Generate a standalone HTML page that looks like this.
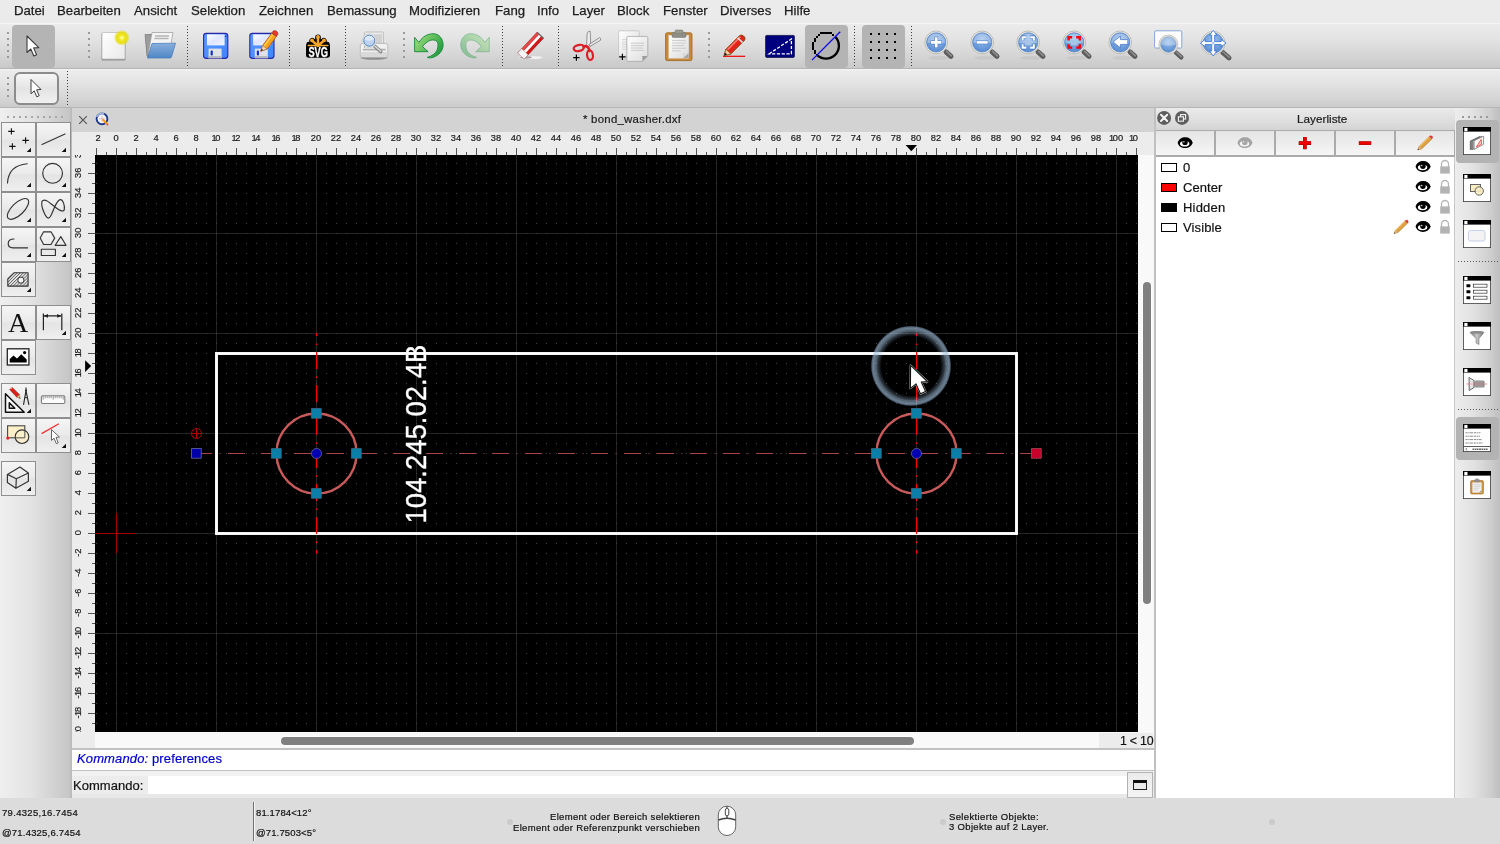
<!DOCTYPE html>
<html><head><meta charset="utf-8"><title>QCAD</title>
<style>
html,body{margin:0;padding:0;}
body{width:1500px;height:844px;overflow:hidden;position:relative;background:#ececec;font-family:"Liberation Sans",sans-serif;color:#1e1e1e;}
.abs{position:absolute;}
svg{position:absolute;overflow:visible;}
#menubar{left:0;top:0;width:1500px;height:23px;background:#ebebeb;}
#menubar span{position:absolute;top:2px;font-size:13.2px;line-height:18px;color:#1c1c1c;white-space:nowrap;}
#tb1{left:0;top:23px;width:1500px;height:45px;background:linear-gradient(#f5f5f5 0,#f5f5f5 1px,#ebebeb 1.5px,#e3e3e3 35%,#d6d6d6 70%,#c9c9c9);border-bottom:1px solid #b4b4b4;box-sizing:content-box;}
#tb2{left:0;top:69px;width:1500px;height:38px;background:linear-gradient(#f3f3f3 0,#f3f3f3 1px,#ececec 1.5px,#e2e2e2 40%,#d6d6d6 75%,#cbcbcb);border-bottom:1px solid #b6b6b6;}
.sel{background:#b4b4b4;border-radius:4px;}
.vsep{width:0;border-left:1px dotted #555;}
.grip{width:2px;}
#left{left:0;top:108px;width:72px;height:690px;background:linear-gradient(90deg,#efefef,#e2e2e2 45%,#c6c6c6 96%,#b8b8b8);}
.tbtn{position:absolute;width:33px;height:33px;border:1px solid #8f8f8f;background:linear-gradient(#f5f5f5,#eaeaea 48%,#e4e4e4 52%,#efefef);box-sizing:content-box;}
#status{left:0;top:798px;width:1500px;height:46px;background:#dcdcdc;}
#status div{position:absolute;font-size:9.5px;line-height:12px;white-space:nowrap;color:#111;}

#root{position:absolute;left:0;top:0;width:1500px;height:844px;}
#menubar span,#status div,.t{will-change:transform;}
svg.t{will-change:transform;}
#menubar span{-webkit-text-stroke:0.25px #1c1c1c;}
#status div{-webkit-text-stroke:0.2px #111;}
.t{-webkit-text-stroke:0.2px currentColor;}

</style></head>
<body>
<!-- menubar.html -->
<div id="menubar" class="abs">
<span style="left:14px">Datei</span>
<span style="left:57px">Bearbeiten</span>
<span style="left:134px">Ansicht</span>
<span style="left:191px">Selektion</span>
<span style="left:259px">Zeichnen</span>
<span style="left:327px">Bemassung</span>
<span style="left:409px">Modifizieren</span>
<span style="left:495px">Fang</span>
<span style="left:537px">Info</span>
<span style="left:572px">Layer</span>
<span style="left:617px">Block</span>
<span style="left:663px">Fenster</span>
<span style="left:720px">Diverses</span>
<span style="left:784px">Hilfe</span>
</div>

<!-- toolbar.html -->
<div id="tb1" class="abs"></div>
<div id="tb2" class="abs"></div>
<div class="abs sel" style="left:12px;top:24.8px;width:43px;height:43.2px;"></div>
<div class="abs sel" style="left:805px;top:24.8px;width:43px;height:43.2px;"></div>
<div class="abs sel" style="left:862px;top:24.8px;width:43px;height:43.2px;"></div>
<div class="abs" style="left:14px;top:72px;width:41px;height:29px;border:2px solid #8c8c8c;border-radius:6px;background:linear-gradient(#f6f6f6,#e4e4e4 50%,#f0f0f0);"></div>
<svg width="1500" height="844" viewBox="0 0 1500 844" style="left:0;top:0">
<defs>
<linearGradient id="gpaper" x1="0" y1="0" x2="1" y2="1"><stop offset="0" stop-color="#ffffff"/><stop offset="1" stop-color="#e9e9e9"/></linearGradient>
<radialGradient id="gglow"><stop offset="0" stop-color="#ffffd0"/><stop offset="0.18" stop-color="#fbf45a"/><stop offset="0.45" stop-color="#ece314"/><stop offset="0.72" stop-color="#e6dc00" stop-opacity="0.8"/><stop offset="1" stop-color="#e6dc00" stop-opacity="0"/></radialGradient>
<linearGradient id="gfold" x1="0" y1="0" x2="0" y2="1"><stop offset="0" stop-color="#8ab0dc"/><stop offset="1" stop-color="#4f86c6"/></linearGradient>
<linearGradient id="gfloppy" x1="0" y1="0" x2="1" y2="1"><stop offset="0" stop-color="#5a9cff"/><stop offset="1" stop-color="#3f84ff"/></linearGradient>
<linearGradient id="glabel" x1="0" y1="0" x2="1" y2="1"><stop offset="0" stop-color="#ffffff"/><stop offset="0.5" stop-color="#dfe6ff"/><stop offset="1" stop-color="#f4f6ff"/></linearGradient>
<radialGradient id="glens" cx="0.5" cy="0.35" r="0.7"><stop offset="0" stop-color="#9dc0ea"/><stop offset="1" stop-color="#4f86cf"/></radialGradient>
<linearGradient id="gundo" x1="0" y1="0" x2="0" y2="1"><stop offset="0" stop-color="#6fd06f"/><stop offset="1" stop-color="#168a3a"/></linearGradient>
<g id="mag">
 <ellipse cx="3" cy="15.4" rx="11" ry="2" fill="#000" opacity="0.05"/>
 <line x1="9.8" y1="9.4" x2="14.8" y2="14" stroke="#5c5c5c" stroke-width="5" stroke-linecap="round"/>
 <line x1="10.4" y1="9" x2="15.2" y2="13.4" stroke="#8e8e8e" stroke-width="1.6" stroke-linecap="round"/>
 <circle cx="0" cy="0" r="11.4" fill="#e6e6e0" stroke="#b4b4ac" stroke-width="0.8"/>
 <circle cx="0" cy="0" r="9.6" fill="url(#glens)" stroke="#5a86cc" stroke-width="0.8"/>
 <path d="M-9.2,0.4 A9.2,9.2 0 0 1 9.2,0.4 Q0,1.4 -9.2,0.4Z" fill="#fff" opacity="0.28"/>
</g>
</defs>
<!-- grips -->
<g fill="#9a9a9a">
<g id="grip1"><rect x="7" y="32" width="2" height="2"/><rect x="7" y="38" width="2" height="2"/><rect x="7" y="44" width="2" height="2"/><rect x="7" y="50" width="2" height="2"/><rect x="7" y="56" width="2" height="2"/></g>
<use href="#grip1" x="81"/><use href="#grip1" x="396"/><use href="#grip1" x="701"/>
<rect x="7" y="77" width="2" height="2"/><rect x="7" y="83" width="2" height="2"/><rect x="7" y="89" width="2" height="2"/><rect x="7" y="95" width="2" height="2"/>
</g>
<!-- dotted separators -->
<g stroke="#3c3c3c" stroke-width="1" stroke-dasharray="1 2">
<line x1="187.5" y1="26" x2="187.5" y2="66"/><line x1="289.5" y1="26" x2="289.5" y2="66"/><line x1="345.5" y1="26" x2="345.5" y2="66"/>
<line x1="502.5" y1="26" x2="502.5" y2="66"/><line x1="558.5" y1="26" x2="558.5" y2="66"/><line x1="854.5" y1="26" x2="854.5" y2="66"/><line x1="911.5" y1="26" x2="911.5" y2="66"/>
<line x1="67.5" y1="71" x2="67.5" y2="105"/>
</g>
<!-- arrow (selected) -->
<path d="M27,36 L27,52.5 L30.8,49 L33.8,56 L36.6,54.8 L33.6,47.9 L38.8,47.6 Z" fill="#fff" stroke="#3c3c3c" stroke-width="1.1" stroke-linejoin="round"/>
<!-- arrow (tb2) -->
<path d="M31,79.5 L31,93.8 L34.2,90.8 L36.8,96.8 L39.2,95.7 L36.6,89.8 L41,89.5 Z" fill="#fff" stroke="#3c3c3c" stroke-width="1" stroke-linejoin="round"/>
<!-- new -->
<g>
<rect x="101.5" y="33" width="24" height="27.6" rx="1.5" fill="#8e8e8e"/>
<rect x="102" y="32.5" width="23" height="26.5" rx="1" fill="url(#gpaper)" stroke="#bdbdbd" stroke-width="0.8"/>
<circle cx="121.8" cy="37.8" r="8" fill="url(#gglow)"/>
</g>
<!-- open -->
<g>
<path d="M145,35 L151,34 L151,56 L147,57 Z" fill="#8a8a8a"/>
<path d="M145,34.5 L160,34.5 L158,56 L147,56 Z" fill="#9c9c9c" stroke="#7a7a7a" stroke-width="0.6"/>
<path d="M152,32.5 L173,32.5 L170,50 L148,55 Z" fill="#f4f4f4" stroke="#9a9a9a" stroke-width="0.7"/>
<path d="M155,36 L169,36 M154.5,38.5 L168.5,38.5" stroke="#b4b4b4" stroke-width="1.4"/>
<path d="M152,43.5 L175.5,43.2 L171.5,57 Q171,58 170,58 L147.5,58 Z" fill="url(#gfold)" stroke="#4a7fbd" stroke-width="0.8" stroke-linejoin="round"/>
</g>
<!-- save -->
<g id="floppy">
<rect x="203.6" y="33.4" width="24.2" height="25" rx="2.6" fill="url(#gfloppy)" stroke="#2727a8" stroke-width="1.1"/>
<rect x="207" y="34.4" width="17.6" height="11" fill="url(#glabel)"/>
<rect x="208.6" y="48.6" width="13" height="9.6" fill="#e2e2e6"/>
<rect x="208.6" y="56" width="13" height="2.2" fill="#b8b8c0"/>
<rect x="210.6" y="50.6" width="2.2" height="5" rx="0.8" fill="#1030c8"/>
<rect x="225" y="35.6" width="1.4" height="1.4" fill="#1c3cc8"/>
</g>
<!-- save as -->
<use href="#floppy" x="46.2"/>
<g>
<path d="M260.8,51.2 L262.6,45.6 L271.8,33 L276.4,36.4 L267.2,49 Z" fill="#f7a21e" stroke="#b5501a" stroke-width="0.8" stroke-linejoin="round"/>
<path d="M264,46.4 L272.6,34.6" stroke="#ffd24a" stroke-width="1.6"/>
<path d="M271.8,33 L273.2,31 Q275,30 277,31.6 Q278.4,33.4 277.8,34.4 L276.4,36.4Z" fill="#e63a2c" stroke="#a0281e" stroke-width="0.6"/>
<path d="M260.8,51.2 L262.6,45.6 L267.2,49 Z" fill="#f3d9b0" stroke="#8a5a2a" stroke-width="0.5"/>
<path d="M260.8,51.2 L261.6,48.8 L263,49.9Z" fill="#222"/>
</g>
<!-- SVG logo -->
<g>
<path d="M318,46 L318,37.2 M318,46 L312.2,40.6 M318,46 L323.8,40.6 M318,46 L309,44.6 M318,46 L327,44.6" stroke="#000" stroke-width="5.6" stroke-linecap="round" fill="none"/>
<rect x="306" y="44" width="24" height="13.8" rx="2.8" fill="#000"/>
<path d="M318,46 L318,37.2 M318,46 L312.2,40.6 M318,46 L323.8,40.6" stroke="#f8a626" stroke-width="2.5" stroke-linecap="round" fill="none"/>
<path d="M308.2,45.4 L327.8,45.4" stroke="#f8a626" stroke-width="1.5" stroke-linecap="round"/>
<g fill="#f8a626"><circle cx="318" cy="37" r="1.9"/><circle cx="312" cy="40.4" r="1.9"/><circle cx="324" cy="40.4" r="1.9"/></g>
</g>
<!-- print preview -->
<g>
<ellipse cx="374" cy="57.8" rx="13.4" ry="2" fill="#000" opacity="0.32"/>
<rect x="364.4" y="32" width="19" height="14" rx="0.8" fill="#ececec" stroke="#b4b4b4" stroke-width="0.8"/>
<rect x="373.6" y="34.2" width="8.4" height="9.6" fill="#d2d2d2"/>
<path d="M362.4,43.4 L385.6,43.4 Q387.8,43.6 387.8,45.8 L387.8,55 Q387.8,57.2 385.6,57.2 L362.4,57.2 Q360.3,57.2 360.3,55 L360.3,45.8 Q360.3,43.4 362.4,43.4Z" fill="#f0f0f0" stroke="#b0b0b0" stroke-width="0.8"/>
<path d="M360.7,52 L387.4,52 L387.4,55 Q387.4,56.8 385.6,56.8 L362.4,56.8 Q360.7,56.8 360.7,55Z" fill="#d9d9d9"/>
<rect x="362.8" y="48.8" width="23" height="1.8" rx="0.9" fill="#b2b2b2"/>
<circle cx="364.6" cy="47" r="0.6" fill="#666"/>
<line x1="374.6" y1="46.2" x2="380.8" y2="51.6" stroke="#8a8a8a" stroke-width="3.6" stroke-linecap="round"/>
<line x1="375" y1="46.2" x2="380.8" y2="51.2" stroke="#dcdcdc" stroke-width="1.4" stroke-linecap="round"/>
<circle cx="369.3" cy="40.7" r="7" fill="#ebebe7" stroke="#c2c2bc" stroke-width="0.6"/>
<circle cx="369.3" cy="40.7" r="5.5" fill="#bcd2ee" stroke="#4f82cc" stroke-width="1"/>
<path d="M364.4,39.8 A5,5 0 0 1 374.2,39.6 Q369.4,42 364.4,39.8Z" fill="#fff" opacity="0.5"/>
</g>
<!-- undo -->
<defs>
<linearGradient id="gundo2" x1="0" y1="0.2" x2="1" y2="0.8"><stop offset="0" stop-color="#9cdc7c"/><stop offset="0.45" stop-color="#62c05c"/><stop offset="0.8" stop-color="#34a648"/><stop offset="1" stop-color="#1c9440"/></linearGradient>
<path id="undoP" d="M414.6,37.3 L414.6,51.7 L428.1,51.7 L422.4,46.5 C425,43.6 427.4,41.6 429.6,40.6 C431,40 432.6,39.8 433.8,40 C436.4,40.4 438,42 438,44.4 C438,46.4 437.8,48.2 437.2,49.8 C435.6,53.6 431.6,56.4 427.2,57.4 C428.6,58 430.4,58 432,57.6 C438.6,56 443.1,50.8 443.1,44.8 C443.1,38.4 438.8,33.7 433.2,33.7 C429.6,33.7 426.4,35 423.6,37 C421.8,38.4 420.2,40.4 418.8,42.4 Z"/>
</defs>
<use href="#undoP" fill="url(#gundo2)" stroke="#14883a" stroke-width="0.9" stroke-linejoin="round"/>
<!-- redo (disabled) -->
<g transform="translate(903.8,0) scale(-1,1)" opacity="0.42"><use href="#undoP" fill="url(#gundo2)" stroke="#14883a" stroke-width="0.9" stroke-linejoin="round"/></g>
<!-- eraser -->
<g>
<ellipse cx="531" cy="57.6" rx="12" ry="1.5" fill="#fff" opacity="0.7"/>
<ellipse cx="526" cy="57.4" rx="6" ry="1.3" fill="#6a5a5a" opacity="0.55"/>
<g transform="translate(530.8,45.4) rotate(-47)">
<rect x="-14.4" y="-4.4" width="28.4" height="8.8" fill="#d01818" stroke="#8a1a1a" stroke-width="0.5"/>
<rect x="-14.4" y="-4.4" width="28.4" height="2.6" fill="#e24a4a"/>
<rect x="-14.4" y="-1.4" width="28.4" height="2.8" fill="#fff"/>
<rect x="-14.4" y="-4.4" width="5.6" height="8.8" fill="#f6f6f6" stroke="#b8a0a0" stroke-width="0.5"/>
<rect x="13.2" y="-4.4" width="1.2" height="8.8" fill="#6a6a6a"/>
</g>
</g>
<!-- scissors (cut) -->
<g>
<path d="M586.6,46.6 L587.2,33 Q588.4,30.6 590.2,31.4 L590.6,43 L588.6,47 Z" fill="#efefef" stroke="#6a6a6a" stroke-width="0.7" stroke-linejoin="round"/>
<path d="M588.8,44.6 L599.6,37.6 Q601,38 600.6,40.2 L590,46.4 Z" fill="#e8e8e8" stroke="#6a6a6a" stroke-width="0.7" stroke-linejoin="round"/>
<ellipse cx="578.8" cy="48" rx="5.2" ry="3" transform="rotate(-12 578.8 48)" fill="none" stroke="#e01c24" stroke-width="2.2"/>
<ellipse cx="590" cy="55.2" rx="2.9" ry="4.8" transform="rotate(-8 590 55.2)" fill="none" stroke="#e01c24" stroke-width="2.2"/>
<path d="M583.4,46.6 Q586.4,45.4 588,47.4 Q589.4,49 589.2,51" fill="none" stroke="#e01c24" stroke-width="2.6" stroke-linecap="round"/>
<path d="M573.2,57.6 L579.6,57.6 M576.4,54.4 L576.4,60.8" stroke="#000" stroke-width="1.2"/>
</g>
<!-- copy -->
<g>
<defs><linearGradient id="gpg" x1="0" y1="0" x2="1" y2="1"><stop offset="0" stop-color="#ffffff"/><stop offset="1" stop-color="#dcdcdc"/></linearGradient></defs>
<rect x="618.6" y="30.8" width="20.6" height="25.4" rx="1.2" fill="url(#gpg)" stroke="#c2c2c2" stroke-width="0.8"/>
<path d="M622,39.6 L628,39.6 M622,42 L628,42 M622,44.4 L628,44.4 M622,46.8 L628,46.8 M622,49.2 L628,49.2" stroke="#d4d4d4" stroke-width="0.9"/>
<path d="M628,36.4 L646.6,36.4 Q647.8,36.4 647.8,37.6 L647.8,56 L642.4,61.4 L628,61.4 Q626.8,61.4 626.8,60.2 L626.8,37.6 Q626.8,36.4 628,36.4 Z" fill="url(#gpg)" stroke="#a6a6a6" stroke-width="0.8"/>
<path d="M647.6,56 L642.4,56 L642.4,61.2 Z" fill="#9c9c9c"/>
<path d="M631,43.2 L644,43.2 M631,45.6 L644,45.6 M631,48 L643,48 M631,50.4 L644,50.4" stroke="#c6c6c6" stroke-width="0.9"/>
<path d="M619.2,56.9 L625.6,56.9 M622.4,53.7 L622.4,60.1" stroke="#000" stroke-width="1.2"/>
</g>
<!-- paste -->
<g>
<rect x="665.6" y="32.8" width="26.4" height="27.8" rx="1.6" fill="#c88a38" stroke="#9c6418" stroke-width="0.8"/>
<rect x="668.8" y="35.2" width="20" height="23" fill="url(#gpg)" stroke="#d8d8d8" stroke-width="0.4"/>
<path d="M672,40.4 L686,40.4 M672,43 L685.6,43 M672,45.6 L684,45.6 M672,48.2 L686,48.2 M672,50.8 L680.6,50.8" stroke="#c4c4c4" stroke-width="0.9"/>
<path d="M688.6,53 L683.4,53 L683.4,58 L688.6,58Z" fill="#a6a6a6"/><path d="M688.6,53 L683.4,58 L683.4,53Z" fill="#dedede"/>
<rect x="672" y="32.4" width="14" height="5" rx="1.2" fill="#8e8e86" stroke="#74746c" stroke-width="0.5"/>
<rect x="675" y="30" width="8" height="3.4" rx="1" fill="#9c9c94" stroke="#74746c" stroke-width="0.5"/>
</g>
<!-- pencil -->
<g>
<line x1="723" y1="56.3" x2="745.2" y2="56.3" stroke="#f00000" stroke-width="1.2"/>
<path d="M724.2,55.4 L726,49.2 L739.6,35.6 Q741.6,34.2 743.6,36 L744.4,36.8 Q745.8,38.8 744.4,40.4 L730.8,54 Z" fill="#e42418" stroke="#7a4a10" stroke-width="0.9" stroke-linejoin="round"/>
<path d="M727.6,49.6 L740.4,36.8" stroke="#ff7a6a" stroke-width="1.6"/>
<path d="M737.6,37.8 L742.6,42.6" stroke="#d8d8d8" stroke-width="1.8"/>
<path d="M724.2,55.4 L726,49.2 L730.8,54 Z" fill="#f0d2a4" stroke="#7a4a10" stroke-width="0.6" stroke-linejoin="round"/>
<path d="M724.2,55.4 L725,52.6 L727,54.6Z" fill="#111"/>
</g>
<!-- draft -->
<g>
<rect x="765.6" y="35.4" width="28.8" height="22" rx="1" fill="#00007e" stroke="#10104a" stroke-width="0.8"/>
<path d="M769.2,53.8 L791.4,39 L791.4,53.8 Z" fill="none" stroke="#fff" stroke-width="1.3" stroke-dasharray="3.2 1.6"/>
</g>
<!-- circle-slash -->
<g>
<clipPath id="cul"><path d="M800,72.1 L852,20 L800,20Z"/></clipPath>
<clipPath id="clr"><path d="M800,72.1 L852,20 L852,72.1Z"/></clipPath>
<g fill="#000" shape-rendering="crispEdges"><rect x="812" y="42" width="2" height="2"/><rect x="812" y="44" width="2" height="2"/><rect x="812" y="46" width="2" height="2"/><rect x="812" y="48" width="2" height="2"/><rect x="814" y="38" width="2" height="2"/><rect x="814" y="40" width="2" height="2"/><rect x="814" y="50" width="2" height="2"/><rect x="814" y="52" width="2" height="2"/><rect x="816" y="36" width="2" height="2"/><rect x="816" y="54" width="2" height="2"/><rect x="818" y="34" width="2" height="2"/><rect x="820" y="32" width="2" height="2"/><rect x="822" y="32" width="2" height="2"/><rect x="824" y="32" width="2" height="2"/><rect x="826" y="32" width="2" height="2"/><rect x="828" y="32" width="2" height="2"/><rect x="830" y="32" width="2" height="2"/><rect x="832" y="34" width="2" height="2"/></g>
<circle cx="826" cy="45.8" r="12.9" fill="none" stroke="#000" stroke-width="2.3" clip-path="url(#clr)"/>
<line x1="812" y1="60.1" x2="840.2" y2="31.8" stroke="#0a0af4" stroke-width="1.3"/>
</g>
<!-- grid -->
<g fill="#000">
<rect x="870" y="33" width="2" height="2"/><rect x="878" y="33" width="2" height="2"/><rect x="886" y="33" width="2" height="2"/><rect x="894" y="33" width="2" height="2"/><rect x="870" y="41" width="2" height="2"/><rect x="878" y="41" width="2" height="2"/><rect x="886" y="41" width="2" height="2"/><rect x="894" y="41" width="2" height="2"/><rect x="870" y="49" width="2" height="2"/><rect x="878" y="49" width="2" height="2"/><rect x="886" y="49" width="2" height="2"/><rect x="894" y="49" width="2" height="2"/><rect x="870" y="57" width="2" height="2"/><rect x="878" y="57" width="2" height="2"/><rect x="886" y="57" width="2" height="2"/><rect x="894" y="57" width="2" height="2"/>
</g>
<!-- zoom in -->
<use href="#mag" x="936.2" y="42.4"/>
<path d="M930.6,42.4 L941.8,42.4 M936.2,36.8 L936.2,48" stroke="#3a6cc0" stroke-width="3.8"/><path d="M931,42.4 L941.4,42.4 M936.2,37.2 L936.2,47.6" stroke="#fff" stroke-width="2.8"/>
<!-- zoom out -->
<use href="#mag" x="982.2" y="42.4"/>
<path d="M976.2,42.4 L988.2,42.4" stroke="#3a6cc0" stroke-width="3.6"/><path d="M976.6,42.4 L987.8,42.4" stroke="#fff" stroke-width="2.6"/>
<!-- zoom auto -->
<use href="#mag" x="1028.2" y="42.4"/>
<rect x="1025" y="39.6" width="6.4" height="5.6" fill="#a8c4e8"/>
<path d="M1022.6,40.6 L1022.6,37.2 L1026.2,37.2 M1030.2,37.2 L1033.8,37.2 L1033.8,40.6 M1033.8,44.2 L1033.8,47.6 L1030.2,47.6 M1026.2,47.6 L1022.6,47.6 L1022.6,44.2" fill="none" stroke="#3a6cc0" stroke-width="3.2"/>
<path d="M1022.6,40.6 L1022.6,37.2 L1026.2,37.2 M1030.2,37.2 L1033.8,37.2 L1033.8,40.6 M1033.8,44.2 L1033.8,47.6 L1030.2,47.6 M1026.2,47.6 L1022.6,47.6 L1022.6,44.2" fill="none" stroke="#fff" stroke-width="2.1"/>
<!-- zoom selection -->
<use href="#mag" x="1074.2" y="42.4"/>
<rect x="1071" y="39.6" width="6.4" height="5.6" fill="#a8c4e8"/>
<path d="M1068.6,40.6 L1068.6,37.2 L1072.2,37.2 M1076.2,37.2 L1079.8,37.2 L1079.8,40.6 M1079.8,44.2 L1079.8,47.6 L1076.2,47.6 M1072.2,47.6 L1068.6,47.6 L1068.6,44.2" fill="none" stroke="#f80010" stroke-width="2.4"/>
<!-- zoom previous -->
<use href="#mag" x="1120.2" y="42.4"/>
<path d="M1113,42 L1120.4,36.2 L1120.4,39.6 L1127.8,39.6 L1127.8,44.4 L1120.4,44.4 L1120.4,47.8 Z" fill="#fff" stroke="#3a6cc0" stroke-width="0.7" stroke-linejoin="round"/>
<!-- zoom window -->
<g>
<rect x="1154.6" y="30.8" width="27.2" height="17.2" rx="1.2" fill="#fdfdfd" stroke="#7a9cd4" stroke-width="0.9"/>
<line x1="1176" y1="52.6" x2="1181.2" y2="57.2" stroke="#5c5c5c" stroke-width="4.6" stroke-linecap="round"/>
<line x1="1176.4" y1="52.2" x2="1181.4" y2="56.6" stroke="#8e8e8e" stroke-width="1.5" stroke-linecap="round"/>
<circle cx="1168.4" cy="44.6" r="9.6" fill="#e2e2dc" stroke="#b8b8b0" stroke-width="0.7"/>
<circle cx="1168.4" cy="44.6" r="7.8" fill="url(#glens)" stroke="#8d9bb0" stroke-width="0.5"/>
<path d="M1160.8,44.6 A7.6,7.6 0 0 1 1176,44.6 Q1168.4,47 1160.8,44.6Z" fill="#fff" opacity="0.3"/>
</g>
<!-- pan -->
<g>
<line x1="1222.6" y1="52.4" x2="1229" y2="57.8" stroke="#5c5c5c" stroke-width="5" stroke-linecap="round"/>
<line x1="1223" y1="52" x2="1229.2" y2="57.2" stroke="#8e8e8e" stroke-width="1.6" stroke-linecap="round"/>
<circle cx="1213.2" cy="43.1" r="11.8" fill="#e6e6e0" stroke="#b4b4ac" stroke-width="0.8"/>
<circle cx="1213.2" cy="43.1" r="10.1" fill="url(#glens)" stroke="#5a86cc" stroke-width="0.8"/>
<path d="M1213.2,30.3 L1216.9,35.1 L1214.7,35.1 L1214.7,41.6 L1221.2,41.6 L1221.2,39.4 L1226.0,43.1 L1221.2,46.8 L1221.2,44.6 L1214.7,44.6 L1214.7,51.1 L1216.9,51.1 L1213.2,55.9 L1209.5,51.1 L1211.7,51.1 L1211.7,44.6 L1205.2,44.6 L1205.2,46.8 L1200.4,43.1 L1205.2,39.4 L1205.2,41.6 L1211.7,41.6 L1211.7,35.1 L1209.5,35.1Z" fill="#fff" stroke="#3f78d4" stroke-width="0.9" stroke-linejoin="round"/>
<rect x="1211.7" y="41.6" width="3" height="3" fill="#b4ccf0"/>
</g>
</svg>
<svg class="t" width="40" height="20" viewBox="300 44 40 20" style="left:300px;top:44px"><text x="318.2" y="57" font-family="Liberation Sans" font-weight="bold" font-size="14.2" fill="#fff" stroke="#fff" stroke-width="0.3" text-anchor="middle" textLength="19.6" lengthAdjust="spacingAndGlyphs">SVG</text></svg>

<!-- lefttools.html -->
<div id="left" class="abs"></div>
<div class="tbtn" style="left:1.0px;top:122.0px"></div>
<div class="tbtn" style="left:36.0px;top:122.0px"></div>
<div class="tbtn" style="left:1.0px;top:157.0px"></div>
<div class="tbtn" style="left:36.0px;top:157.0px"></div>
<div class="tbtn" style="left:1.0px;top:192.0px"></div>
<div class="tbtn" style="left:36.0px;top:192.0px"></div>
<div class="tbtn" style="left:1.0px;top:227.0px"></div>
<div class="tbtn" style="left:36.0px;top:227.0px"></div>
<div class="tbtn" style="left:1.0px;top:262.0px"></div>
<div class="tbtn" style="left:1.0px;top:305.0px"></div>
<div class="tbtn" style="left:36.0px;top:305.0px"></div>
<div class="tbtn" style="left:1.0px;top:340.0px"></div>
<div class="tbtn" style="left:1.0px;top:383.0px"></div>
<div class="tbtn" style="left:36.0px;top:383.0px"></div>
<div class="tbtn" style="left:1.0px;top:418.0px"></div>
<div class="tbtn" style="left:36.0px;top:418.0px"></div>
<div class="tbtn" style="left:1.0px;top:461.0px"></div>
<svg width="1500" height="844" viewBox="0 0 1500 844" style="left:0;top:0">
<g fill="#a6a6a6"><rect x="7" y="116" width="2" height="2"/><rect x="13" y="116" width="2" height="2"/><rect x="19" y="116" width="2" height="2"/><rect x="25" y="116" width="2" height="2"/><rect x="31" y="116" width="2" height="2"/><rect x="37" y="116" width="2" height="2"/><rect x="43" y="116" width="2" height="2"/><rect x="49" y="116" width="2" height="2"/><rect x="55" y="116" width="2" height="2"/><rect x="61" y="116" width="2" height="2"/></g>
<g fill="#111">
<path d="M31.0,147.7 L31.0,152.0 L26.7,152.0 Z"/>
<path d="M66.0,147.7 L66.0,152.0 L61.7,152.0 Z"/>
<path d="M31.0,182.7 L31.0,187.0 L26.7,187.0 Z"/>
<path d="M66.0,182.7 L66.0,187.0 L61.7,187.0 Z"/>
<path d="M31.0,217.7 L31.0,222.0 L26.7,222.0 Z"/>
<path d="M66.0,217.7 L66.0,222.0 L61.7,222.0 Z"/>
<path d="M31.0,252.7 L31.0,257.0 L26.7,257.0 Z"/>
<path d="M66.0,252.7 L66.0,257.0 L61.7,257.0 Z"/>
<path d="M31.0,287.7 L31.0,292.0 L26.7,292.0 Z"/>
<path d="M66.0,330.7 L66.0,335.0 L61.7,335.0 Z"/>
<path d="M31.0,408.7 L31.0,413.0 L26.7,413.0 Z"/>
<path d="M66.0,443.7 L66.0,448.0 L61.7,448.0 Z"/>
<path d="M31.0,486.7 L31.0,491.0 L26.7,491.0 Z"/>
</g>
<g stroke="#111" stroke-width="1.1"><path d="M8.2,131.4 L14.6,131.4 M11.4,128.2 L11.4,134.6 M22.4,140.4 L28.8,140.4 M25.6,137.2 L25.6,143.6 M9.2,146.4 L15.6,146.4 M12.4,143.2 L12.4,149.6"/></g>
<path d="M42,144.6 L65,134" stroke="#333" stroke-width="1.15" fill="none" stroke-linecap="round"/>
<path d="M7.5,183 Q8.5,165.5 27.2,163.8" stroke="#333" stroke-width="1.15" fill="none" stroke-linecap="round"/>
<circle cx="52.6" cy="173.3" r="9.9" stroke="#333" stroke-width="1.15" fill="none" stroke-linecap="round"/>
<ellipse cx="18" cy="208.9" rx="13.6" ry="6" transform="rotate(-44 18 208.9)" stroke="#333" stroke-width="1.15" fill="none" stroke-linecap="round"/>
<path d="M42,201.4 C44.5,197.5 50,203 55,207 C59,210.2 63.6,212.6 64.3,209.6 C65,206 63,199.4 60.4,199.6 C57.6,199.8 56,204 54,208.4 C52,213 50.6,218.2 48.3,218.1 C45.6,218 40.6,206.4 42,201.4 Z" stroke="#333" stroke-width="1.15" fill="none" stroke-linecap="round"/>
<path d="M14,239 Q8.2,239 8.2,243.5 Q8.2,247.8 13,247.8 L27.6,247.8" stroke="#333" stroke-width="1.15" fill="none" stroke-linecap="round"/>
<path d="M43.6,231.8 L51,231.8 L54.7,238.1 L51,244.5 L43.6,244.5 L40.2,238.1 Z M60.8,236.6 L66,245.3 L55.2,245.3 Z M41.3,249.2 L55.4,249.2 L55.4,255.5 L41.3,255.5 Z" stroke="#333" stroke-width="1.15" fill="none" stroke-linecap="round" stroke-linejoin="round"/>
<defs><pattern id="hat" width="2.2" height="2.2" patternUnits="userSpaceOnUse" patternTransform="rotate(45)"><rect width="0.9" height="2.2" fill="#666"/></pattern></defs>
<path d="M7.8,279 L14.2,272.7 L28.1,272.7 L28.1,286.1 L7.8,286.1 Z" fill="#f0f0f0"/>
<path d="M7.8,279 L14.2,272.7 L28.1,272.7 L28.1,286.1 L7.8,286.1 Z" fill="url(#hat)" stroke="#333" stroke-width="1.1" stroke-linejoin="round"/>
<circle cx="20.9" cy="280.1" r="3.1" fill="#f4f4f4" stroke="#333" stroke-width="1"/>
<path d="M43.4,313.6 L43.4,330.2 M61.8,313.6 L61.8,330.2 M44,315.9 L61,315.9" stroke="#222" stroke-width="1.2" fill="none"/>
<path d="M43.8,315.9 L48,314 L48,317.8Z M61.4,315.9 L57.2,314 L57.2,317.8Z" fill="#222"/>
<rect x="7.3" y="348.8" width="21.6" height="16.2" fill="#fff" stroke="#222" stroke-width="1.3"/>
<path d="M9.7,362.4 L9.7,359 L13.5,355.6 L17,358.6 L21.3,354.2 L26.7,359.6 L26.7,362.4 Z" fill="#000"/><circle cx="24.6" cy="352.6" r="1.6" fill="#000"/>
<path d="M5.5,393.8 L5.5,412.2 L24.2,412.2 Z M9.3,402.8 L9.3,408.3 L14.8,408.3 Z" stroke="#111" stroke-width="1.5" fill="#f8f8f8" stroke-linejoin="round" fill-rule="evenodd"/>
<path d="M9.6,389.6 L12.2,387.4 L19.4,394.6 L16.8,397.2 Z" fill="#dc2018" stroke="#7a1a10" stroke-width="0.5"/><path d="M10.2,389 L11.6,387.8" stroke="#f0a0a0" stroke-width="1.6"/><path d="M16.8,397.2 L19.4,394.6 L20.4,398.6Z" fill="#e8c48a" stroke="#6a4a2a" stroke-width="0.4"/><path d="M19.4,397.2 L20.4,398.6 L18.8,398Z" fill="#222"/>
<path d="M26,387.4 L26,391 M26,390.6 L23.5,404.8 M26,390.6 L28.9,404.8 M24.6,397.8 L27.6,397.8" stroke="#222" stroke-width="1.1" fill="none"/><circle cx="26" cy="390.4" r="1" fill="#222"/>
<rect x="41.4" y="395.7" width="23.4" height="7.8" rx="1.2" fill="#fbfbfb" stroke="#7c7c7c" stroke-width="1.1"/>
<path d="M43.2,396.2 L43.2,399.6 M45.2,396.2 L45.2,398.2 M47.2,396.2 L47.2,398.2 M49.2,396.2 L49.2,398.2 M51.2,396.2 L51.2,398.2 M53.2,396.2 L53.2,399.6 M55.2,396.2 L55.2,398.2 M57.2,396.2 L57.2,398.2 M59.2,396.2 L59.2,398.2 M61.2,396.2 L61.2,398.2 M63.2,396.2 L63.2,399.6 " stroke="#555" stroke-width="0.6"/>
<rect x="7.6" y="425.8" width="17.2" height="12" fill="#fdf0c8" stroke="#444" stroke-width="1.1"/>
<circle cx="22" cy="436.7" r="6.8" fill="#fdf0c8" fill-opacity="0.8" stroke="#333" stroke-width="1.1"/>
<path d="M15.4,437.8 L24.8,437.8 L24.8,430" fill="none" stroke="#555" stroke-width="0.9"/>
<circle cx="7.8" cy="438.1" r="1.6" fill="#f02020"/>
<path d="M41.6,433.6 L58.9,423.7" stroke="#f03030" stroke-width="1.3" fill="none"/>
<path d="M51.5,429.6 L51.5,440.4 L54,438.2 L56.3,443.6 L58.2,442.8 L56,437.4 L59.4,437 Z" fill="#fff" stroke="#555" stroke-width="0.9" stroke-linejoin="round"/>
<path d="M7.4,474.4 L19.9,467 L28.4,473 L28.4,481.2 L15.9,488.3 L7.4,482.6 Z M7.4,474.4 L16.3,478.8 L28.4,473 M16.3,478.8 L15.9,488.3" stroke="#333" stroke-width="1.2" fill="none" stroke-linejoin="round"/>
</svg>
<svg class="t" width="40" height="40" viewBox="0 300 40 40" style="left:0;top:300px"><text x="18.1" y="331.5" font-family="Liberation Serif" font-size="28" text-anchor="middle" fill="#111">A</text></svg>

<!-- canvas.html -->
<div class="abs" style="left:72px;top:108px;width:1083px;height:24px;background:#d3d3d3;"></div>
<div class="abs" style="left:72px;top:132px;width:1083px;height:23px;background:#ececec;"></div>
<div class="abs" style="left:72px;top:155px;width:23px;height:577px;background:#ececec;"></div>
<div class="abs" style="left:95px;top:155px;width:1043px;height:577px;background:#000;"></div>
<div class="abs" style="left:1138px;top:155px;width:16px;height:577px;background:#f9f9f9;"></div>
<div class="abs" style="left:1143px;top:282px;width:8px;height:322px;border-radius:4px;background:#808080;box-shadow:0 0 0 1px #ffffff;"></div>
<div class="abs" style="left:95px;top:732px;width:1059px;height:16px;background:#f9f9f9;"></div>
<div class="abs" style="left:72px;top:732px;width:23px;height:16px;background:#ececec;"></div>
<div class="abs" style="left:281px;top:737px;width:633px;height:8px;border-radius:4px;background:#808080;box-shadow:0 0 0 1px #ffffff;"></div>
<div class="abs" style="left:1099px;top:733px;width:54px;height:15px;background:#ececec;"></div>
<div class="abs t" style="left:1119.7px;top:731.6px;font-size:12.4px;line-height:18px;letter-spacing:-0.233px;white-space:nowrap;color:#111;">1 &lt; 10</div>
<div class="abs t" style="left:583px;top:110px;font-size:11.4px;line-height:18px;color:#1a1a1a;letter-spacing:0.263px;white-space:nowrap;">* bond_washer.dxf</div>
<svg width="1500" height="844" viewBox="0 0 1500 844" style="left:0;top:0">
<defs><clipPath id="cv"><rect x="95" y="155" width="1043" height="577"/></clipPath>
<clipPath id="vr"><rect x="72" y="155" width="23" height="577"/></clipPath>
<clipPath id="hr"><rect x="72" y="132" width="1066" height="23"/></clipPath>
<pattern id="dots" x="96" y="153" width="10" height="10" patternUnits="userSpaceOnUse"><rect x="0" y="0" width="1" height="1" fill="#424242"/></pattern>
<radialGradient id="ring" r="0.5"><stop offset="0.73" stop-color="#a0c0e0" stop-opacity="0"/><stop offset="0.80" stop-color="#a0c0e0" stop-opacity="0.22"/><stop offset="0.87" stop-color="#a4c4e2" stop-opacity="0.45"/><stop offset="0.93" stop-color="#a8c8e6" stop-opacity="0.6"/><stop offset="0.965" stop-color="#a0c0e0" stop-opacity="0.55"/><stop offset="1" stop-color="#a0c0e0" stop-opacity="0"/></radialGradient>
</defs>
<g stroke="#555" stroke-width="1">
<line x1="96.5" y1="148" x2="96.5" y2="155"/>
<line x1="106.5" y1="152" x2="106.5" y2="155"/>
<line x1="116.5" y1="148" x2="116.5" y2="155"/>
<line x1="126.5" y1="152" x2="126.5" y2="155"/>
<line x1="136.5" y1="148" x2="136.5" y2="155"/>
<line x1="146.5" y1="152" x2="146.5" y2="155"/>
<line x1="156.5" y1="148" x2="156.5" y2="155"/>
<line x1="166.5" y1="152" x2="166.5" y2="155"/>
<line x1="176.5" y1="148" x2="176.5" y2="155"/>
<line x1="186.5" y1="152" x2="186.5" y2="155"/>
<line x1="196.5" y1="148" x2="196.5" y2="155"/>
<line x1="206.5" y1="152" x2="206.5" y2="155"/>
<line x1="216.5" y1="148" x2="216.5" y2="155"/>
<line x1="226.5" y1="152" x2="226.5" y2="155"/>
<line x1="236.5" y1="148" x2="236.5" y2="155"/>
<line x1="246.5" y1="152" x2="246.5" y2="155"/>
<line x1="256.5" y1="148" x2="256.5" y2="155"/>
<line x1="266.5" y1="152" x2="266.5" y2="155"/>
<line x1="276.5" y1="148" x2="276.5" y2="155"/>
<line x1="286.5" y1="152" x2="286.5" y2="155"/>
<line x1="296.5" y1="148" x2="296.5" y2="155"/>
<line x1="306.5" y1="152" x2="306.5" y2="155"/>
<line x1="316.5" y1="148" x2="316.5" y2="155"/>
<line x1="326.5" y1="152" x2="326.5" y2="155"/>
<line x1="336.5" y1="148" x2="336.5" y2="155"/>
<line x1="346.5" y1="152" x2="346.5" y2="155"/>
<line x1="356.5" y1="148" x2="356.5" y2="155"/>
<line x1="366.5" y1="152" x2="366.5" y2="155"/>
<line x1="376.5" y1="148" x2="376.5" y2="155"/>
<line x1="386.5" y1="152" x2="386.5" y2="155"/>
<line x1="396.5" y1="148" x2="396.5" y2="155"/>
<line x1="406.5" y1="152" x2="406.5" y2="155"/>
<line x1="416.5" y1="148" x2="416.5" y2="155"/>
<line x1="426.5" y1="152" x2="426.5" y2="155"/>
<line x1="436.5" y1="148" x2="436.5" y2="155"/>
<line x1="446.5" y1="152" x2="446.5" y2="155"/>
<line x1="456.5" y1="148" x2="456.5" y2="155"/>
<line x1="466.5" y1="152" x2="466.5" y2="155"/>
<line x1="476.5" y1="148" x2="476.5" y2="155"/>
<line x1="486.5" y1="152" x2="486.5" y2="155"/>
<line x1="496.5" y1="148" x2="496.5" y2="155"/>
<line x1="506.5" y1="152" x2="506.5" y2="155"/>
<line x1="516.5" y1="148" x2="516.5" y2="155"/>
<line x1="526.5" y1="152" x2="526.5" y2="155"/>
<line x1="536.5" y1="148" x2="536.5" y2="155"/>
<line x1="546.5" y1="152" x2="546.5" y2="155"/>
<line x1="556.5" y1="148" x2="556.5" y2="155"/>
<line x1="566.5" y1="152" x2="566.5" y2="155"/>
<line x1="576.5" y1="148" x2="576.5" y2="155"/>
<line x1="586.5" y1="152" x2="586.5" y2="155"/>
<line x1="596.5" y1="148" x2="596.5" y2="155"/>
<line x1="606.5" y1="152" x2="606.5" y2="155"/>
<line x1="616.5" y1="148" x2="616.5" y2="155"/>
<line x1="626.5" y1="152" x2="626.5" y2="155"/>
<line x1="636.5" y1="148" x2="636.5" y2="155"/>
<line x1="646.5" y1="152" x2="646.5" y2="155"/>
<line x1="656.5" y1="148" x2="656.5" y2="155"/>
<line x1="666.5" y1="152" x2="666.5" y2="155"/>
<line x1="676.5" y1="148" x2="676.5" y2="155"/>
<line x1="686.5" y1="152" x2="686.5" y2="155"/>
<line x1="696.5" y1="148" x2="696.5" y2="155"/>
<line x1="706.5" y1="152" x2="706.5" y2="155"/>
<line x1="716.5" y1="148" x2="716.5" y2="155"/>
<line x1="726.5" y1="152" x2="726.5" y2="155"/>
<line x1="736.5" y1="148" x2="736.5" y2="155"/>
<line x1="746.5" y1="152" x2="746.5" y2="155"/>
<line x1="756.5" y1="148" x2="756.5" y2="155"/>
<line x1="766.5" y1="152" x2="766.5" y2="155"/>
<line x1="776.5" y1="148" x2="776.5" y2="155"/>
<line x1="786.5" y1="152" x2="786.5" y2="155"/>
<line x1="796.5" y1="148" x2="796.5" y2="155"/>
<line x1="806.5" y1="152" x2="806.5" y2="155"/>
<line x1="816.5" y1="148" x2="816.5" y2="155"/>
<line x1="826.5" y1="152" x2="826.5" y2="155"/>
<line x1="836.5" y1="148" x2="836.5" y2="155"/>
<line x1="846.5" y1="152" x2="846.5" y2="155"/>
<line x1="856.5" y1="148" x2="856.5" y2="155"/>
<line x1="866.5" y1="152" x2="866.5" y2="155"/>
<line x1="876.5" y1="148" x2="876.5" y2="155"/>
<line x1="886.5" y1="152" x2="886.5" y2="155"/>
<line x1="896.5" y1="148" x2="896.5" y2="155"/>
<line x1="906.5" y1="152" x2="906.5" y2="155"/>
<line x1="916.5" y1="148" x2="916.5" y2="155"/>
<line x1="926.5" y1="152" x2="926.5" y2="155"/>
<line x1="936.5" y1="148" x2="936.5" y2="155"/>
<line x1="946.5" y1="152" x2="946.5" y2="155"/>
<line x1="956.5" y1="148" x2="956.5" y2="155"/>
<line x1="966.5" y1="152" x2="966.5" y2="155"/>
<line x1="976.5" y1="148" x2="976.5" y2="155"/>
<line x1="986.5" y1="152" x2="986.5" y2="155"/>
<line x1="996.5" y1="148" x2="996.5" y2="155"/>
<line x1="1006.5" y1="152" x2="1006.5" y2="155"/>
<line x1="1016.5" y1="148" x2="1016.5" y2="155"/>
<line x1="1026.5" y1="152" x2="1026.5" y2="155"/>
<line x1="1036.5" y1="148" x2="1036.5" y2="155"/>
<line x1="1046.5" y1="152" x2="1046.5" y2="155"/>
<line x1="1056.5" y1="148" x2="1056.5" y2="155"/>
<line x1="1066.5" y1="152" x2="1066.5" y2="155"/>
<line x1="1076.5" y1="148" x2="1076.5" y2="155"/>
<line x1="1086.5" y1="152" x2="1086.5" y2="155"/>
<line x1="1096.5" y1="148" x2="1096.5" y2="155"/>
<line x1="1106.5" y1="152" x2="1106.5" y2="155"/>
<line x1="1116.5" y1="148" x2="1116.5" y2="155"/>
<line x1="1126.5" y1="152" x2="1126.5" y2="155"/>
<line x1="1136.5" y1="148" x2="1136.5" y2="155"/>
<line x1="92" y1="723.5" x2="95" y2="723.5"/>
<line x1="88" y1="713.5" x2="95" y2="713.5"/>
<line x1="92" y1="703.5" x2="95" y2="703.5"/>
<line x1="88" y1="693.5" x2="95" y2="693.5"/>
<line x1="92" y1="683.5" x2="95" y2="683.5"/>
<line x1="88" y1="673.5" x2="95" y2="673.5"/>
<line x1="92" y1="663.5" x2="95" y2="663.5"/>
<line x1="88" y1="653.5" x2="95" y2="653.5"/>
<line x1="92" y1="643.5" x2="95" y2="643.5"/>
<line x1="88" y1="633.5" x2="95" y2="633.5"/>
<line x1="92" y1="623.5" x2="95" y2="623.5"/>
<line x1="88" y1="613.5" x2="95" y2="613.5"/>
<line x1="92" y1="603.5" x2="95" y2="603.5"/>
<line x1="88" y1="593.5" x2="95" y2="593.5"/>
<line x1="92" y1="583.5" x2="95" y2="583.5"/>
<line x1="88" y1="573.5" x2="95" y2="573.5"/>
<line x1="92" y1="563.5" x2="95" y2="563.5"/>
<line x1="88" y1="553.5" x2="95" y2="553.5"/>
<line x1="92" y1="543.5" x2="95" y2="543.5"/>
<line x1="88" y1="533.5" x2="95" y2="533.5"/>
<line x1="92" y1="523.5" x2="95" y2="523.5"/>
<line x1="88" y1="513.5" x2="95" y2="513.5"/>
<line x1="92" y1="503.5" x2="95" y2="503.5"/>
<line x1="88" y1="493.5" x2="95" y2="493.5"/>
<line x1="92" y1="483.5" x2="95" y2="483.5"/>
<line x1="88" y1="473.5" x2="95" y2="473.5"/>
<line x1="92" y1="463.5" x2="95" y2="463.5"/>
<line x1="88" y1="453.5" x2="95" y2="453.5"/>
<line x1="92" y1="443.5" x2="95" y2="443.5"/>
<line x1="88" y1="433.5" x2="95" y2="433.5"/>
<line x1="92" y1="423.5" x2="95" y2="423.5"/>
<line x1="88" y1="413.5" x2="95" y2="413.5"/>
<line x1="92" y1="403.5" x2="95" y2="403.5"/>
<line x1="88" y1="393.5" x2="95" y2="393.5"/>
<line x1="92" y1="383.5" x2="95" y2="383.5"/>
<line x1="88" y1="373.5" x2="95" y2="373.5"/>
<line x1="92" y1="363.5" x2="95" y2="363.5"/>
<line x1="88" y1="353.5" x2="95" y2="353.5"/>
<line x1="92" y1="343.5" x2="95" y2="343.5"/>
<line x1="88" y1="333.5" x2="95" y2="333.5"/>
<line x1="92" y1="323.5" x2="95" y2="323.5"/>
<line x1="88" y1="313.5" x2="95" y2="313.5"/>
<line x1="92" y1="303.5" x2="95" y2="303.5"/>
<line x1="88" y1="293.5" x2="95" y2="293.5"/>
<line x1="92" y1="283.5" x2="95" y2="283.5"/>
<line x1="88" y1="273.5" x2="95" y2="273.5"/>
<line x1="92" y1="263.5" x2="95" y2="263.5"/>
<line x1="88" y1="253.5" x2="95" y2="253.5"/>
<line x1="92" y1="243.5" x2="95" y2="243.5"/>
<line x1="88" y1="233.5" x2="95" y2="233.5"/>
<line x1="92" y1="223.5" x2="95" y2="223.5"/>
<line x1="88" y1="213.5" x2="95" y2="213.5"/>
<line x1="92" y1="203.5" x2="95" y2="203.5"/>
<line x1="88" y1="193.5" x2="95" y2="193.5"/>
<line x1="92" y1="183.5" x2="95" y2="183.5"/>
<line x1="88" y1="173.5" x2="95" y2="173.5"/>
<line x1="92" y1="163.5" x2="95" y2="163.5"/>
</g>
<path d="M79.2,116.2 L86.8,123.8 M86.8,116.2 L79.2,123.8" stroke="#555" stroke-width="1.2" fill="none"/>
<circle cx="102" cy="118.8" r="5.4" fill="#f6f6f8" stroke="#1e3a8a" stroke-width="1.9"/>
<path d="M96.8,117 A5.4,5.4 0 0 1 104,113.7" stroke="#9fb0d8" stroke-width="1.9" fill="none"/>
<path d="M99,118.8 L105,118.8 M102,115.8 L102,121.8" stroke="#c8a0a8" stroke-width="0.6"/>
<path d="M102.6,119.2 L107,124" stroke="#f6a010" stroke-width="2" stroke-linecap="butt"/><circle cx="107.4" cy="124.4" r="1" fill="#e05050"/>
<path d="M905.6,145 L917,145 L911.3,151.2 Z" fill="#000"/>
<path d="M85.1,360.2 L85.1,372 L91.2,366 Z" fill="#000"/>
<g clip-path="url(#cv)">
<g stroke="#232323" stroke-width="1">
<line x1="116.5" y1="155" x2="116.5" y2="732"/>
<line x1="216.5" y1="155" x2="216.5" y2="732"/>
<line x1="316.5" y1="155" x2="316.5" y2="732"/>
<line x1="416.5" y1="155" x2="416.5" y2="732"/>
<line x1="516.5" y1="155" x2="516.5" y2="732"/>
<line x1="616.5" y1="155" x2="616.5" y2="732"/>
<line x1="716.5" y1="155" x2="716.5" y2="732"/>
<line x1="816.5" y1="155" x2="816.5" y2="732"/>
<line x1="916.5" y1="155" x2="916.5" y2="732"/>
<line x1="1016.5" y1="155" x2="1016.5" y2="732"/>
<line x1="1116.5" y1="155" x2="1116.5" y2="732"/>
<line x1="95" y1="233.5" x2="1138" y2="233.5"/>
<line x1="95" y1="333.5" x2="1138" y2="333.5"/>
<line x1="95" y1="433.5" x2="1138" y2="433.5"/>
<line x1="95" y1="533.5" x2="1138" y2="533.5"/>
<line x1="95" y1="633.5" x2="1138" y2="633.5"/>
</g>
<rect x="95" y="155" width="1043" height="577" fill="url(#dots)"/>
<path d="M96,533.5 L136,533.5 M116.5,513 L116.5,553" stroke="#a40000" stroke-width="1"/>
<rect x="216.5" y="353.5" width="800" height="180" fill="none" stroke="#fff" stroke-width="2.9"/>
<line x1="196" y1="453.5" x2="1037" y2="453.5" stroke="#a84444" stroke-width="1" stroke-dasharray="17 7.5 1 7.5" stroke-dashoffset="1"/>
<line x1="316.6" y1="333" x2="316.6" y2="553.5" stroke="#ff0000" stroke-width="1.3" stroke-dasharray="17 7.5 1.4 7.1" stroke-dashoffset="14"/>
<line x1="916.6" y1="333" x2="916.6" y2="553.5" stroke="#ff0000" stroke-width="1.3" stroke-dasharray="17 7.5 1.4 7.1" stroke-dashoffset="14"/>
<circle cx="316.5" cy="453.5" r="40" fill="none" stroke="#c85a5a" stroke-width="2.4"/>
<circle cx="916.5" cy="453.5" r="40" fill="none" stroke="#c85a5a" stroke-width="2.4"/>
<rect x="311.6" y="408.6" width="9.6" height="9.6" fill="#0a7fa8" stroke="#3a6a8a" stroke-width="0.8"/>
<rect x="311.6" y="488.6" width="9.6" height="9.6" fill="#0a7fa8" stroke="#3a6a8a" stroke-width="0.8"/>
<rect x="271.6" y="448.6" width="9.6" height="9.6" fill="#0a7fa8" stroke="#3a6a8a" stroke-width="0.8"/>
<rect x="351.6" y="448.6" width="9.6" height="9.6" fill="#0a7fa8" stroke="#3a6a8a" stroke-width="0.8"/>
<circle cx="316.5" cy="453.5" r="5" fill="#0000b0" stroke="#6a6a9a" stroke-width="0.8"/>
<rect x="911.6" y="408.6" width="9.6" height="9.6" fill="#0a7fa8" stroke="#3a6a8a" stroke-width="0.8"/>
<rect x="911.6" y="488.6" width="9.6" height="9.6" fill="#0a7fa8" stroke="#3a6a8a" stroke-width="0.8"/>
<rect x="871.6" y="448.6" width="9.6" height="9.6" fill="#0a7fa8" stroke="#3a6a8a" stroke-width="0.8"/>
<rect x="951.6" y="448.6" width="9.6" height="9.6" fill="#0a7fa8" stroke="#3a6a8a" stroke-width="0.8"/>
<circle cx="916.5" cy="453.5" r="5" fill="#0000b0" stroke="#6a6a9a" stroke-width="0.8"/>
<rect x="191.6" y="448.6" width="9.6" height="9.6" fill="#0000a8" stroke="#6a6aa0" stroke-width="0.8"/>
<rect x="1031.6" y="448.6" width="9.6" height="9.6" fill="#c8002a" stroke="#a04a5a" stroke-width="0.8"/>
<g stroke="#b40000" stroke-width="1" fill="none"><circle cx="196.5" cy="433.5" r="5"/><path d="M191.5,433.5 L201.5,433.5 M196.5,428.5 L196.5,438.5"/></g>
<circle cx="911" cy="365.9" r="40.4" fill="url(#ring)"/>
<g fill="none" stroke="#8ea4b8" stroke-opacity="0.35" stroke-width="0.6"><circle cx="911" cy="365.9" r="35"/><circle cx="911" cy="365.9" r="36.4"/><circle cx="911" cy="365.9" r="37.8"/></g>
</g>
<path d="M910.6,365.3 L910.4,388.4 L916,383.9 L920.5,393.8 L925.6,391.6 L921.3,382.1 L927.4,381.5 Z" fill="#fff" stroke="#fff" stroke-opacity="0.8" stroke-width="1.8" stroke-linejoin="round"/>
<path d="M910.6,365.3 L910.4,388.4 L916,383.9 L920.5,393.8 L925.6,391.6 L921.3,382.1 L927.4,381.5 Z" fill="#fff" stroke="#111" stroke-width="1.1" stroke-linejoin="round"/>
</svg>
<svg class="t" width="1500" height="844" viewBox="0 0 1500 844" style="left:0;top:0">
<g font-family="Liberation Sans" font-size="9.3" fill="#1a1a1a" stroke="#1a1a1a" stroke-width="0.2" text-anchor="start">
<g clip-path="url(#hr)">
<text x="95.6" y="140.8">2</text>
<text x="113.4" y="140.8">0</text>
<text x="133.4" y="140.8">2</text>
<text x="153.4" y="140.8">4</text>
<text x="173.4" y="140.8">6</text>
<text x="193.4" y="140.8">8</text>
<text x="211.5 215.3" y="140.8">10</text>
<text x="231.5 235.3" y="140.8">12</text>
<text x="251.5 255.3" y="140.8">14</text>
<text x="271.5 275.3" y="140.8">16</text>
<text x="291.5 295.3" y="140.8">18</text>
<text x="310.8 316.0" y="140.8">20</text>
<text x="330.8 336.0" y="140.8">22</text>
<text x="350.8 356.0" y="140.8">24</text>
<text x="370.8 376.0" y="140.8">26</text>
<text x="390.8 396.0" y="140.8">28</text>
<text x="410.8 416.0" y="140.8">30</text>
<text x="430.8 436.0" y="140.8">32</text>
<text x="450.8 456.0" y="140.8">34</text>
<text x="470.8 476.0" y="140.8">36</text>
<text x="490.8 496.0" y="140.8">38</text>
<text x="510.8 516.0" y="140.8">40</text>
<text x="530.8 536.0" y="140.8">42</text>
<text x="550.8 556.0" y="140.8">44</text>
<text x="570.8 576.0" y="140.8">46</text>
<text x="590.8 596.0" y="140.8">48</text>
<text x="610.8 616.0" y="140.8">50</text>
<text x="630.8 636.0" y="140.8">52</text>
<text x="650.8 656.0" y="140.8">54</text>
<text x="670.8 676.0" y="140.8">56</text>
<text x="690.8 696.0" y="140.8">58</text>
<text x="710.8 716.0" y="140.8">60</text>
<text x="730.8 736.0" y="140.8">62</text>
<text x="750.8 756.0" y="140.8">64</text>
<text x="770.8 776.0" y="140.8">66</text>
<text x="790.8 796.0" y="140.8">68</text>
<text x="810.8 816.0" y="140.8">70</text>
<text x="830.8 836.0" y="140.8">72</text>
<text x="850.8 856.0" y="140.8">74</text>
<text x="870.8 876.0" y="140.8">76</text>
<text x="890.8 896.0" y="140.8">78</text>
<text x="910.8 916.0" y="140.8">80</text>
<text x="930.8 936.0" y="140.8">82</text>
<text x="950.8 956.0" y="140.8">84</text>
<text x="970.8 976.0" y="140.8">86</text>
<text x="990.8 996.0" y="140.8">88</text>
<text x="1010.8 1016.0" y="140.8">90</text>
<text x="1030.8 1036.0" y="140.8">92</text>
<text x="1050.8 1056.0" y="140.8">94</text>
<text x="1070.8 1076.0" y="140.8">96</text>
<text x="1090.8 1096.0" y="140.8">98</text>
<text x="1108.9 1112.8 1117.9" y="140.8">100</text>
<text x="1128.9 1132.8 1137.9" y="140.8">102</text>
</g><g clip-path="url(#vr)">
<text transform="translate(81.2,732.7) rotate(-90)" x="-6.7 -3.6 1.5">-20</text>
<text transform="translate(81.2,712.7) rotate(-90)" x="-5.8 -3.2 0.6">-18</text>
<text transform="translate(81.2,692.7) rotate(-90)" x="-5.8 -3.2 0.6">-16</text>
<text transform="translate(81.2,672.7) rotate(-90)" x="-5.8 -3.2 0.6">-14</text>
<text transform="translate(81.2,652.7) rotate(-90)" x="-5.8 -3.2 0.6">-12</text>
<text transform="translate(81.2,632.7) rotate(-90)" x="-5.8 -3.2 0.6">-10</text>
<text transform="translate(81.2,612.7) rotate(-90)" x="-4.1 -1.0">-8</text>
<text transform="translate(81.2,592.7) rotate(-90)" x="-4.1 -1.0">-6</text>
<text transform="translate(81.2,572.7) rotate(-90)" x="-4.1 -1.0">-4</text>
<text transform="translate(81.2,552.7) rotate(-90)" x="-4.1 -1.0">-2</text>
<text transform="translate(81.2,532.7) rotate(-90)" x="-2.6">0</text>
<text transform="translate(81.2,512.7) rotate(-90)" x="-2.6">2</text>
<text transform="translate(81.2,492.7) rotate(-90)" x="-2.6">4</text>
<text transform="translate(81.2,472.7) rotate(-90)" x="-2.6">6</text>
<text transform="translate(81.2,452.7) rotate(-90)" x="-2.6">8</text>
<text transform="translate(81.2,432.7) rotate(-90)" x="-4.5 -0.7">10</text>
<text transform="translate(81.2,412.7) rotate(-90)" x="-4.5 -0.7">12</text>
<text transform="translate(81.2,392.7) rotate(-90)" x="-4.5 -0.7">14</text>
<text transform="translate(81.2,372.7) rotate(-90)" x="-4.5 -0.7">16</text>
<text transform="translate(81.2,352.7) rotate(-90)" x="-4.5 -0.7">18</text>
<text transform="translate(81.2,332.7) rotate(-90)" x="-5.2 0.0">20</text>
<text transform="translate(81.2,312.7) rotate(-90)" x="-5.2 0.0">22</text>
<text transform="translate(81.2,292.7) rotate(-90)" x="-5.2 0.0">24</text>
<text transform="translate(81.2,272.7) rotate(-90)" x="-5.2 0.0">26</text>
<text transform="translate(81.2,252.7) rotate(-90)" x="-5.2 0.0">28</text>
<text transform="translate(81.2,232.7) rotate(-90)" x="-5.2 0.0">30</text>
<text transform="translate(81.2,212.7) rotate(-90)" x="-5.2 0.0">32</text>
<text transform="translate(81.2,192.7) rotate(-90)" x="-5.2 0.0">34</text>
<text transform="translate(81.2,172.7) rotate(-90)" x="-5.2 0.0">36</text>
<text transform="translate(81.2,152.7) rotate(-90)" x="-5.2 0.0">38</text>
</g></g>
<text transform="translate(426.4,523.6) rotate(-90)" font-family="Liberation Sans" font-size="28.8" fill="#fff" stroke="#fff" stroke-width="0.35" textLength="179" lengthAdjust="spacingAndGlyphs">104.245.02.4B</text>
</svg>

<!-- cmd.html -->
<div class="abs" style="left:72px;top:748px;width:1082px;height:50px;background:#ececec;"></div>
<div class="abs" style="left:72px;top:748px;width:1082px;height:23px;background:#fff;border-top:2px solid #c2c2c2;border-bottom:1px solid #c2c2c2;box-sizing:border-box;"></div>
<div class="abs" style="left:72px;top:771px;width:1082px;height:5px;background:#f2f2f2;"></div>
<div class="abs" style="left:72px;top:794px;width:1082px;height:4px;background:#e8e8e8;"></div>
<div class="abs t" style="left:77px;top:750.4px;font-size:13px;line-height:18px;color:#0000c8;white-space:nowrap;letter-spacing:0.126px"><i>Kommando:</i> preferences</div>
<div class="abs t" style="left:73.3px;top:776.9px;font-size:13px;line-height:18px;color:#111;white-space:nowrap;letter-spacing:0.034px">Kommando:</div>
<div class="abs" style="left:148px;top:776px;width:980px;height:18px;background:#fff;"></div>
<div class="abs" style="left:1127px;top:772px;width:26px;height:26px;background:linear-gradient(#ebebeb,#f4f4f4);border:1px solid #b2b2b2;box-sizing:border-box;"></div>
<div class="abs" style="left:1133px;top:780px;width:14px;height:10px;border:1px solid #222;border-top:3px solid #111;box-sizing:border-box;background:#ececec;"></div>

<!-- layers.html -->
<div class="abs" style="left:1155px;top:108px;width:300px;height:690px;background:#ececec;"></div>
<div class="abs" style="left:1155px;top:108px;width:300px;height:22px;background:linear-gradient(#eaeaea,#e0e0e0 50%,#d4d4d4);"></div>
<div class="abs" style="left:1155px;top:130px;width:300px;height:27px;background:#ababab;"></div>
<div class="abs" style="left:1155.8px;top:131px;width:58.4px;height:24.2px;background:linear-gradient(#e5e5e5,#ececec 45%,#f6f6f6);"></div>
<div class="abs" style="left:1215.8px;top:131px;width:58.4px;height:24.2px;background:linear-gradient(#e5e5e5,#ececec 45%,#f6f6f6);"></div>
<div class="abs" style="left:1275.8px;top:131px;width:58.4px;height:24.2px;background:linear-gradient(#e5e5e5,#ececec 45%,#f6f6f6);"></div>
<div class="abs" style="left:1335.8px;top:131px;width:58.4px;height:24.2px;background:linear-gradient(#e5e5e5,#ececec 45%,#f6f6f6);"></div>
<div class="abs" style="left:1395.8px;top:131px;width:58.4px;height:24.2px;background:linear-gradient(#e5e5e5,#ececec 45%,#f6f6f6);"></div>
<div class="abs" style="left:1155px;top:157px;width:300px;height:641px;background:#fff;border-right:1px solid #c8c8c8;box-sizing:border-box;"></div>
<div class="abs" style="left:1153.8px;top:108px;width:2px;height:690px;background:#c0c0c0;"></div>
<div class="abs t" style="left:1297px;top:109.6px;font-size:11.7px;line-height:18px;color:#1a1a1a;letter-spacing:0.03px;white-space:nowrap;">Layerliste</div>
<div class="abs" style="left:1161px;top:163px;width:16px;height:9px;background:#fff;border:1px solid #000;box-sizing:border-box;"></div>
<div class="abs t" style="left:1183px;top:158.6px;font-size:13px;line-height:18px;color:#111;letter-spacing:0.000px;white-space:nowrap;">0</div>
<div class="abs" style="left:1161px;top:183px;width:16px;height:9px;background:#ff0000;border:1px solid #000;box-sizing:border-box;"></div>
<div class="abs t" style="left:1183px;top:178.6px;font-size:13px;line-height:18px;color:#111;letter-spacing:0.061px;white-space:nowrap;">Center</div>
<div class="abs" style="left:1161px;top:203px;width:16px;height:9px;background:#000;border:1px solid #000;box-sizing:border-box;"></div>
<div class="abs t" style="left:1183px;top:198.6px;font-size:13px;line-height:18px;color:#111;letter-spacing:0.183px;white-space:nowrap;">Hidden</div>
<div class="abs" style="left:1161px;top:223px;width:16px;height:9px;background:#fff;border:1px solid #000;box-sizing:border-box;"></div>
<div class="abs t" style="left:1183px;top:218.6px;font-size:13px;line-height:18px;color:#111;letter-spacing:0.120px;white-space:nowrap;">Visible</div>
<svg width="1500" height="844" viewBox="0 0 1500 844" style="left:0;top:0">
<defs>
<g id="eye"><path d="M-7.5,0.2 C-6.8,-3.4 -3.4,-5.4 0.2,-5.4 C3.8,-5.4 6.4,-3.4 7.5,0 C6.4,3.2 3.6,5.4 -0.2,5.4 C-3.8,5.4 -6.6,3.2 -7.5,0.2Z" fill="#000"/><ellipse cx="-0.5" cy="1" rx="4.7" ry="2.8" fill="#fff"/><circle cx="-0.2" cy="-0.3" r="2.7" fill="#000"/><circle cx="-1.3" cy="-1" r="0.7" fill="#e4e4e4"/></g>
<g id="lock"><path d="M-3.5,0.4 L-3.5,-2.5 A3.5,3.5 0 0 1 3.5,-2.5 L3.5,0.4" fill="none" stroke="#b6b6b6" stroke-width="1.3"/><rect x="-4.8" y="-0.1" width="9.6" height="7.2" fill="#b3b3b3"/></g>
<g id="pen"><path d="M0,0 L1.6,-3.6 L11.6,-13.4 L14.2,-10.8 L4,-1 Z" fill="#e0a040" stroke="#a06a20" stroke-width="0.5"/><path d="M1.9,-3.3 L11.8,-13" stroke="#f4c86a" stroke-width="1"/><path d="M11.6,-13.4 L12.6,-14.4 Q13.6,-14.8 14.8,-13.6 Q15.6,-12.4 15.2,-11.8 L14.2,-10.8 Z" fill="#e83030"/><path d="M0,0 L1.6,-3.6 L4,-1Z" fill="#d8b888"/><path d="M0,0 L0.7,-1.5 L1.6,-0.5Z" fill="#333"/></g>
</defs>
<circle cx="1164.1" cy="117.9" r="7" fill="#5e5e5e"/><path d="M1161,114.8 L1167.2,121 M1167.2,114.8 L1161,121" stroke="#f4f4f4" stroke-width="2" stroke-linecap="round"/>
<circle cx="1182" cy="117.9" r="7" fill="#5e5e5e"/><rect x="1180.6" y="114.6" width="5" height="4.4" fill="none" stroke="#f4f4f4" stroke-width="1.1"/><rect x="1178.4" y="116.8" width="5" height="4.4" fill="#5e5e5e" stroke="#f4f4f4" stroke-width="1.1"/>
<use href="#eye" x="1185.2" y="142.7"/>
<use href="#eye" x="1245" y="142.7" opacity="0.3"/>
<path d="M1298.7,143.1 L1311.1,143.1 M1304.9,136.9 L1304.9,149.3" stroke="#7a0000" stroke-width="3.6"/><path d="M1299,143.1 L1310.8,143.1 M1304.9,137.2 L1304.9,149" stroke="#f00000" stroke-width="3"/>
<path d="M1358.8,143.1 L1371.2,143.1" stroke="#7a0000" stroke-width="3.6"/><path d="M1359.1,143.1 L1370.9,143.1" stroke="#f00000" stroke-width="3"/>
<use href="#pen" x="1417.6" y="149.9"/>
<use href="#eye" x="1423.1" y="166.5"/>
<use href="#lock" x="1445" y="166.5"/>
<use href="#eye" x="1423.1" y="186.5"/>
<use href="#lock" x="1445" y="186.5"/>
<use href="#eye" x="1423.1" y="206.5"/>
<use href="#lock" x="1445" y="206.5"/>
<use href="#eye" x="1423.1" y="226.5"/>
<use href="#lock" x="1445" y="226.5"/>
<use href="#pen" x="1394" y="233.6" transform="translate(1394 233.6) scale(0.95) translate(-1394 -233.6)"/>
</svg>

<!-- righttools.html -->
<div class="abs" style="left:1455px;top:108px;width:45px;height:690px;background:linear-gradient(90deg,#ededed,#e2e2e2 40%,#cdcdcd 80%,#bebebe);"></div>
<div class="abs sel" style="left:1456.2px;top:120.2px;width:42.7px;height:42.4px;background:#b3b3b3;"></div>
<div class="abs sel" style="left:1456.2px;top:417.3px;width:42.7px;height:42.4px;background:#b3b3b3;"></div>
<svg width="1500" height="844" viewBox="0 0 1500 844" style="left:0;top:0">
<defs><g id="win"><rect x="0.4" y="0.4" width="27.2" height="27.2" fill="#fff" stroke="#3c3c3c" stroke-width="0.8"/><rect x="0" y="0" width="28" height="4.6" fill="#000"/><rect x="1.3" y="0.9" width="3.2" height="3.2" fill="#fff"/></g></defs>
<g fill="#9a9a9a"><rect x="1462" y="116" width="2" height="2"/><rect x="1468" y="116" width="2" height="2"/><rect x="1474" y="116" width="2" height="2"/><rect x="1480" y="116" width="2" height="2"/><rect x="1486" y="116" width="2" height="2"/></g>
<line x1="1458" y1="261.5" x2="1499" y2="261.5" stroke="#555" stroke-width="1" stroke-dasharray="1 2"/>
<line x1="1458" y1="409.5" x2="1499" y2="409.5" stroke="#555" stroke-width="1" stroke-dasharray="1 2"/>
<use href="#win" x="1463" y="127"/>
<use href="#win" x="1463" y="174"/>
<use href="#win" x="1463" y="220"/>
<use href="#win" x="1463" y="276"/>
<use href="#win" x="1463" y="322"/>
<use href="#win" x="1463" y="368"/>
<use href="#win" x="1463" y="424"/>
<use href="#win" x="1463" y="471"/>
<path d="M1470.3,141.0 L1479.8,136.5 L1479.8,144.6 L1470.3,149.8Z" fill="#8a8a8a" stroke="#4a4a4a" stroke-width="0.7" stroke-linejoin="round"/>
<path d="M1472.2,140.8 L1481.7,136.3 L1481.7,144.5 L1472.2,149.7Z" fill="#b4b4b4" stroke="#5a5a5a" stroke-width="0.7" stroke-linejoin="round"/>
<path d="M1474.1,140.7 L1483.6,136.2 L1483.6,144.3 L1474.1,149.5Z" fill="#fbfbfb" stroke="#6a6a6a" stroke-width="0.7" stroke-linejoin="round"/>
<path d="M1476.4,146.9 L1481.2,139.3 L1481.5,144.2 Z" fill="#ffd0d0" stroke="#f03838" stroke-width="0.8" stroke-linejoin="round"/>
<g transform="translate(1463,174)"><rect x="7.5" y="10.5" width="10" height="7" fill="#f8ecc0" stroke="#555" stroke-width="0.9"/><circle cx="16.2" cy="17" r="4.2" fill="#f8ecc0" fill-opacity="0.9" stroke="#555" stroke-width="0.9"/></g>
<g transform="translate(1463,220)"><rect x="5.5" y="10.5" width="16.5" height="10.5" rx="2" fill="#f4f4f4" stroke="#c4d2ea" stroke-width="1"/></g>
<g transform="translate(1463,276)">
<rect x="3.4" y="8.2" width="4" height="3" rx="0.6" fill="#000"/><rect x="10.4" y="8.2" width="13.6" height="3" fill="#fff" stroke="#333" stroke-width="0.7"/>
<rect x="3.4" y="14.2" width="4" height="3" rx="0.6" fill="#000"/><rect x="10.4" y="14.2" width="13.6" height="3" fill="#fff" stroke="#333" stroke-width="0.7"/>
<rect x="3.4" y="20.2" width="4" height="3" rx="0.6" fill="#000"/><rect x="10.4" y="20.2" width="13.6" height="3" fill="#fff" stroke="#333" stroke-width="0.7"/>
</g>
<g transform="translate(1463,322)"><defs><linearGradient id="gfun" x1="0" x2="1"><stop offset="0" stop-color="#7a7a7a"/><stop offset="0.5" stop-color="#c8c8c8"/><stop offset="1" stop-color="#6e6e6e"/></linearGradient></defs><path d="M7,10.5 Q14,8.5 21,10.5 L16,16.5 L16,22.5 L13,21 L13,16.5 Z" fill="url(#gfun)" stroke="#666" stroke-width="0.5"/><ellipse cx="14" cy="10.3" rx="7" ry="1.4" fill="#8a8a8a"/></g>
<g transform="translate(1463,368)"><path d="M6,9.5 L6.2,22.5 L11,19.5 L11,12.5 Z" fill="#e4e4e4" stroke="#444" stroke-width="0.8"/><rect x="11" y="12.5" width="10.6" height="7" rx="1.6" fill="#8c8c8c"/><path d="M13,12.6 L13,19.4 M15,12.6 L15,19.4 M17,12.6 L17,19.4 M19,12.6 L19,19.4" stroke="#b4b4b4" stroke-width="0.7"/><line x1="3.5" y1="16" x2="24" y2="16" stroke="#f06a7a" stroke-width="0.9" stroke-dasharray="3 1 1 1" opacity="0.9"/></g>
<g transform="translate(1463,424)"><g stroke="#8a8a8a" stroke-width="1" stroke-dasharray="2.2 0.6 1.4 0.5 3 0.7">
<line x1="2.4" y1="8.8" x2="17.4" y2="8.8"/>
<line x1="2.4" y1="12.2" x2="17.0" y2="12.2"/>
<line x1="2.4" y1="15.6" x2="19.0" y2="15.6"/>
<line x1="2.4" y1="19.0" x2="19.8" y2="19.0"/>
</g><line x1="0.5" y1="22.5" x2="27.5" y2="22.5" stroke="#333" stroke-width="0.8"/><path d="M4.4,24 L2.6,25.2 L4.4,26.4" stroke="#555" stroke-width="0.6" fill="none"/><line x1="9.5" y1="25.3" x2="25" y2="25.3" stroke="#666" stroke-width="1.6" stroke-dasharray="1.6 0.5 2 0.4"/></g>
<g transform="translate(1463,471)"><rect x="7.6" y="9.6" width="12.8" height="13.4" rx="1.2" fill="#d29440" stroke="#9a6420" stroke-width="0.6"/><rect x="9.4" y="11.4" width="9.2" height="10.2" fill="#f0f0f0"/><path d="M10.6,13.6 L17.4,13.6 M10.6,15.4 L17.4,15.4 M10.6,17.2 L16.4,17.2 M10.6,19 L15,19" stroke="#c8c8c8" stroke-width="0.7"/><path d="M18.6,19 L18.6,21.6 L16,21.6Z" fill="#9a9a9a"/><rect x="11" y="8.6" width="6" height="2.6" rx="0.6" fill="#8e8e8e"/><rect x="12.6" y="7.4" width="2.8" height="1.8" rx="0.6" fill="#8e8e8e"/></g>
</svg>

<!-- status.html -->
<div id="status" class="abs">
<div style="left:2.3px;top:8.7px;letter-spacing:0.311px">79.4325,16.7454</div>
<div style="left:2.3px;top:28.8px;letter-spacing:0.201px">@71.4325,6.7454</div>
<div style="left:253px;top:4px;width:1px;height:39px;background:#6e6e6e;"></div>
<div style="left:254px;top:4px;width:1px;height:39px;background:#f6f6f6;"></div>
<div style="left:256.2px;top:8.7px;letter-spacing:0.121px">81.1784&lt;12°</div>
<div style="left:256.2px;top:28.8px;letter-spacing:0.134px">@71.7503&lt;5°</div>
<div style="left:506.7px;top:21px;width:6px;height:6px;border-radius:3px;background:#cbcbcb;"></div>
<div style="left:549.6px;top:12.5px;letter-spacing:0.314px">Element oder Bereich selektieren</div>
<div style="left:513.4px;top:23.8px;letter-spacing:0.321px">Element oder Referenzpunkt verschieben</div>
<div style="left:940.3px;top:20.8px;width:6px;height:6px;border-radius:3px;background:#cbcbcb;"></div>
<div style="left:949.1px;top:12.7px;letter-spacing:0.355px">Selektierte Objekte:</div>
<div style="left:949.1px;top:23.4px;letter-spacing:0.32px">3 Objekte auf 2 Layer.</div>
<div style="left:1269.2px;top:20.8px;width:6px;height:6px;border-radius:3px;background:#cbcbcb;"></div>
</div>
<svg width="1500" height="844" viewBox="0 0 1500 844" style="left:0;top:0">
<rect x="718.3" y="806.2" width="17.4" height="29.3" rx="8.7" fill="#fff" stroke="#555" stroke-width="0.9"/>
<path d="M718.4,820 Q727,816.6 735.6,820" stroke="#444" stroke-width="1.6" fill="none"/>
<path d="M727,806.4 L727,808.6 M727,815.6 L727,818.4" stroke="#444" stroke-width="1.3"/>
<rect x="725.3" y="808.5" width="3.5" height="7.2" rx="1.6" fill="#fff" stroke="#444" stroke-width="1"/>
</svg>

</body></html>
